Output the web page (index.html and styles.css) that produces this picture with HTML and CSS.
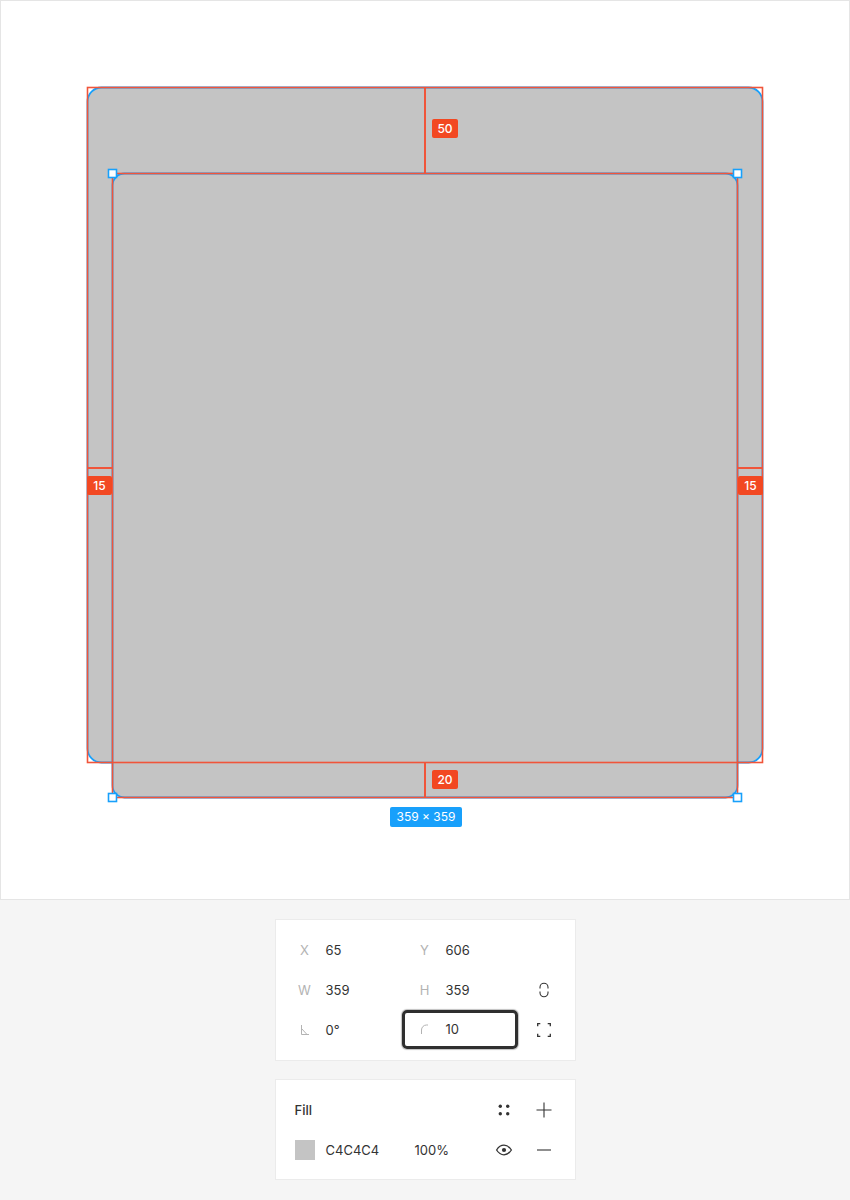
FILE: index.html
```html
<!DOCTYPE html>
<html>
<head>
<meta charset="utf-8">
<link rel="stylesheet" href="styles.css">
</head>
<body>
<div class="canvas">
  <svg class="drawing" width="850" height="900" viewBox="0 0 850 900">
    <rect x="87.5" y="87.5" width="675" height="675" rx="14" fill="#c4c4c4" stroke="#18a0fb" stroke-width="1.8"/>
    <rect x="112.5" y="173.5" width="625" height="624" rx="12" fill="#c4c4c4" stroke="#18a0fb" stroke-width="1.8"/>
    <g stroke="#f0553a" stroke-width="1.6" fill="none">
      <rect x="87.5" y="87.5" width="675" height="675"/>
      <rect x="112.5" y="173.5" width="625" height="624"/>
    </g>
    <g stroke="#f0553a" stroke-width="2" fill="none">
      <line x1="425" y1="87.5" x2="425" y2="173.5"/>
      <line x1="425" y1="762.5" x2="425" y2="797.5"/>
      <line x1="87.5" y1="468" x2="112.5" y2="468"/>
      <line x1="737.5" y1="468" x2="762.5" y2="468"/>
    </g>
    <g fill="#fff" stroke="#18a0fb" stroke-width="1.6">
      <rect x="108.5" y="169.5" width="8" height="8"/>
      <rect x="733.5" y="169.5" width="8" height="8"/>
      <rect x="108.5" y="793.5" width="8" height="8"/>
      <rect x="733.5" y="793.5" width="8" height="8"/>
    </g>
  </svg>
  <div class="tag tag-top">50</div>
  <div class="tag tag-left">15</div>
  <div class="tag tag-right">15</div>
  <div class="tag tag-bottom">20</div>
  <div class="size-tag">359 × 359</div>
</div>

<div class="panels">
  <div class="panel panel-geom">
    <div class="row">
      <div class="group"><span class="lbl">X</span><span class="val">65</span></div>
      <div class="group group2"><span class="lbl">Y</span><span class="val">606</span></div>
      <div class="gap"></div>
      <div class="icon"></div>
    </div>
    <div class="row">
      <div class="group"><span class="lbl">W</span><span class="val">359</span></div>
      <div class="group group2"><span class="lbl">H</span><span class="val">359</span></div>
      <div class="gap"></div>
      <div class="icon">
        <svg width="20" height="20" viewBox="0 0 20 20" fill="none" stroke="#333" stroke-width="1.1">
          <path d="M6 8.6 V7.2 A4 4 0 0 1 14 7.2 V8.6"/>
          <path d="M6 11.4 V12.8 A4 4 0 0 0 14 12.8 V11.4"/>
        </svg>
      </div>
    </div>
    <div class="row">
      <div class="group"><span class="lbl">
        <svg width="12" height="12" viewBox="0 0 12 12" fill="none" stroke="#b3b3b3" stroke-width="1">
          <path d="M2.5 1 V10.5 H10"/>
          <path d="M2.5 4.5 L8 10.5"/>
        </svg>
      </span><span class="val">0°</span></div>
      <div class="group group2 focused"><span class="lbl">
        <svg width="12" height="12" viewBox="0 0 12 12" fill="none" stroke="#b3b3b3" stroke-width="1">
          <path d="M2.5 11 V7 A5 5 0 0 1 7.5 2 H9"/>
        </svg>
      </span><span class="val">10</span></div>
      <div class="gap"></div>
      <div class="icon">
        <svg width="20" height="20" viewBox="0 0 20 20" fill="none" stroke="#333" stroke-width="1.3">
          <path d="M3.7 6.3 V3.7 H6.3"/>
          <path d="M13.7 3.7 H16.3 V6.3"/>
          <path d="M3.7 13.7 V16.3 H6.3"/>
          <path d="M13.7 16.3 H16.3 V13.7"/>
        </svg>
      </div>
    </div>
  </div>

  <div class="panel panel-fill">
    <div class="row">
      <div class="fill-title">Fill</div>
      <div class="icon">
        <svg width="20" height="20" viewBox="0 0 20 20" fill="#333">
          <circle cx="6.3" cy="6.3" r="1.7"/>
          <circle cx="13.7" cy="6.3" r="1.7"/>
          <circle cx="6.3" cy="13.7" r="1.7"/>
          <circle cx="13.7" cy="13.7" r="1.7"/>
        </svg>
      </div>
      <div class="gap2"></div>
      <div class="icon">
        <svg width="20" height="20" viewBox="0 0 20 20" fill="none" stroke="#333" stroke-width="1.1">
          <path d="M10 2.5 V17.5 M2.5 10 H17.5"/>
        </svg>
      </div>
    </div>
    <div class="row">
      <div class="swatch"></div>
      <div class="hex">C4C4C4</div>
      <div class="pct">100%</div>
      <div class="icon">
        <svg width="20" height="20" viewBox="0 0 20 20" fill="none" stroke="#333" stroke-width="1.3">
          <path d="M2.6 10 C4.8 6.5 7.4 5.2 10 5.2 C12.6 5.2 15.2 6.5 17.4 10 C15.2 13.5 12.6 14.8 10 14.8 C7.4 14.8 4.8 13.5 2.6 10 Z"/>
          <circle cx="10" cy="10" r="2.1" fill="#333" stroke="none"/>
        </svg>
      </div>
      <div class="gap2"></div>
      <div class="icon">
        <svg width="20" height="20" viewBox="0 0 20 20" fill="none" stroke="#333" stroke-width="1.1">
          <path d="M3 10 H17"/>
        </svg>
      </div>
    </div>
  </div>
</div>
</body>
</html>
```

FILE: styles.css
```css
* { box-sizing: border-box; }

body {
  margin: 0;
  background: #f5f5f5;
  font-family: Inter, "Noto Sans", sans-serif;
  color: #333;
}

.canvas {
  position: relative;
  width: 850px;
  height: 900px;
  background: #fff;
  border: 1px solid #e5e5e5;
}

.drawing {
  position: absolute;
  left: -1px;
  top: -1px;
}

.tag {
  position: absolute;
  height: 19px;
  padding: 0 5px;
  background: #f24822;
  color: #fff;
  font-size: 12px;
  font-weight: 500;
  line-height: 19px;
  border-radius: 2px;
  text-align: center;
}

.tag-top { left: 431px; top: 118px; width: 26px; }
.tag-left { left: 86px; top: 475px; width: 25px; }
.tag-right { left: 737px; top: 475px; width: 25px; }
.tag-bottom { left: 431px; top: 769px; width: 26px; }

.size-tag {
  position: absolute;
  left: 389px;
  top: 806px;
  width: 72px;
  height: 20px;
  background: #18a0fb;
  color: #fff;
  font-size: 12px;
  line-height: 20px;
  text-align: center;
  border-radius: 2px;
}

.panels {
  display: flex;
  flex-direction: column;
  align-items: center;
  gap: 18px;
  padding-top: 19px;
}

.panel {
  width: 301px;
  background: #fff;
  border: 1px solid #ebebeb;
}

.panel-geom { padding: 10px 0 10px 19px; }
.panel-fill { padding: 10px 0 9px 19px; }

.row {
  display: flex;
  align-items: center;
  height: 40px;
  font-size: 13px;
}

.group {
  display: flex;
  align-items: center;
  width: 107px;
  height: 39px;
}

.group2 {
  width: 116px;
  padding-left: 13px;
}

.focused {
  border: 3px solid #2f2f2f;
  border-radius: 5px;
  padding-left: 10px;
  box-shadow: 0 0 1px 1px rgba(0,0,0,0.25);
  margin-top: -2px;
}

.lbl {
  display: flex;
  align-items: center;
  justify-content: center;
  width: 20px;
  color: #b3b3b3;
}

.val {
  margin-left: 11px;
  color: #333;
}

.gap { width: 16px; }
.gap2 { width: 20px; }

.icon {
  width: 20px;
  height: 20px;
  display: flex;
  align-items: center;
  justify-content: center;
}

.icon svg { display: block; }

.fill-title {
  width: 199px;
  font-weight: 500;
  color: #333;
}

.swatch {
  width: 20px;
  height: 20px;
  background: #c4c4c4;
}

.hex {
  width: 89px;
  margin-left: 11px;
}

.pct { width: 79px; }
```
